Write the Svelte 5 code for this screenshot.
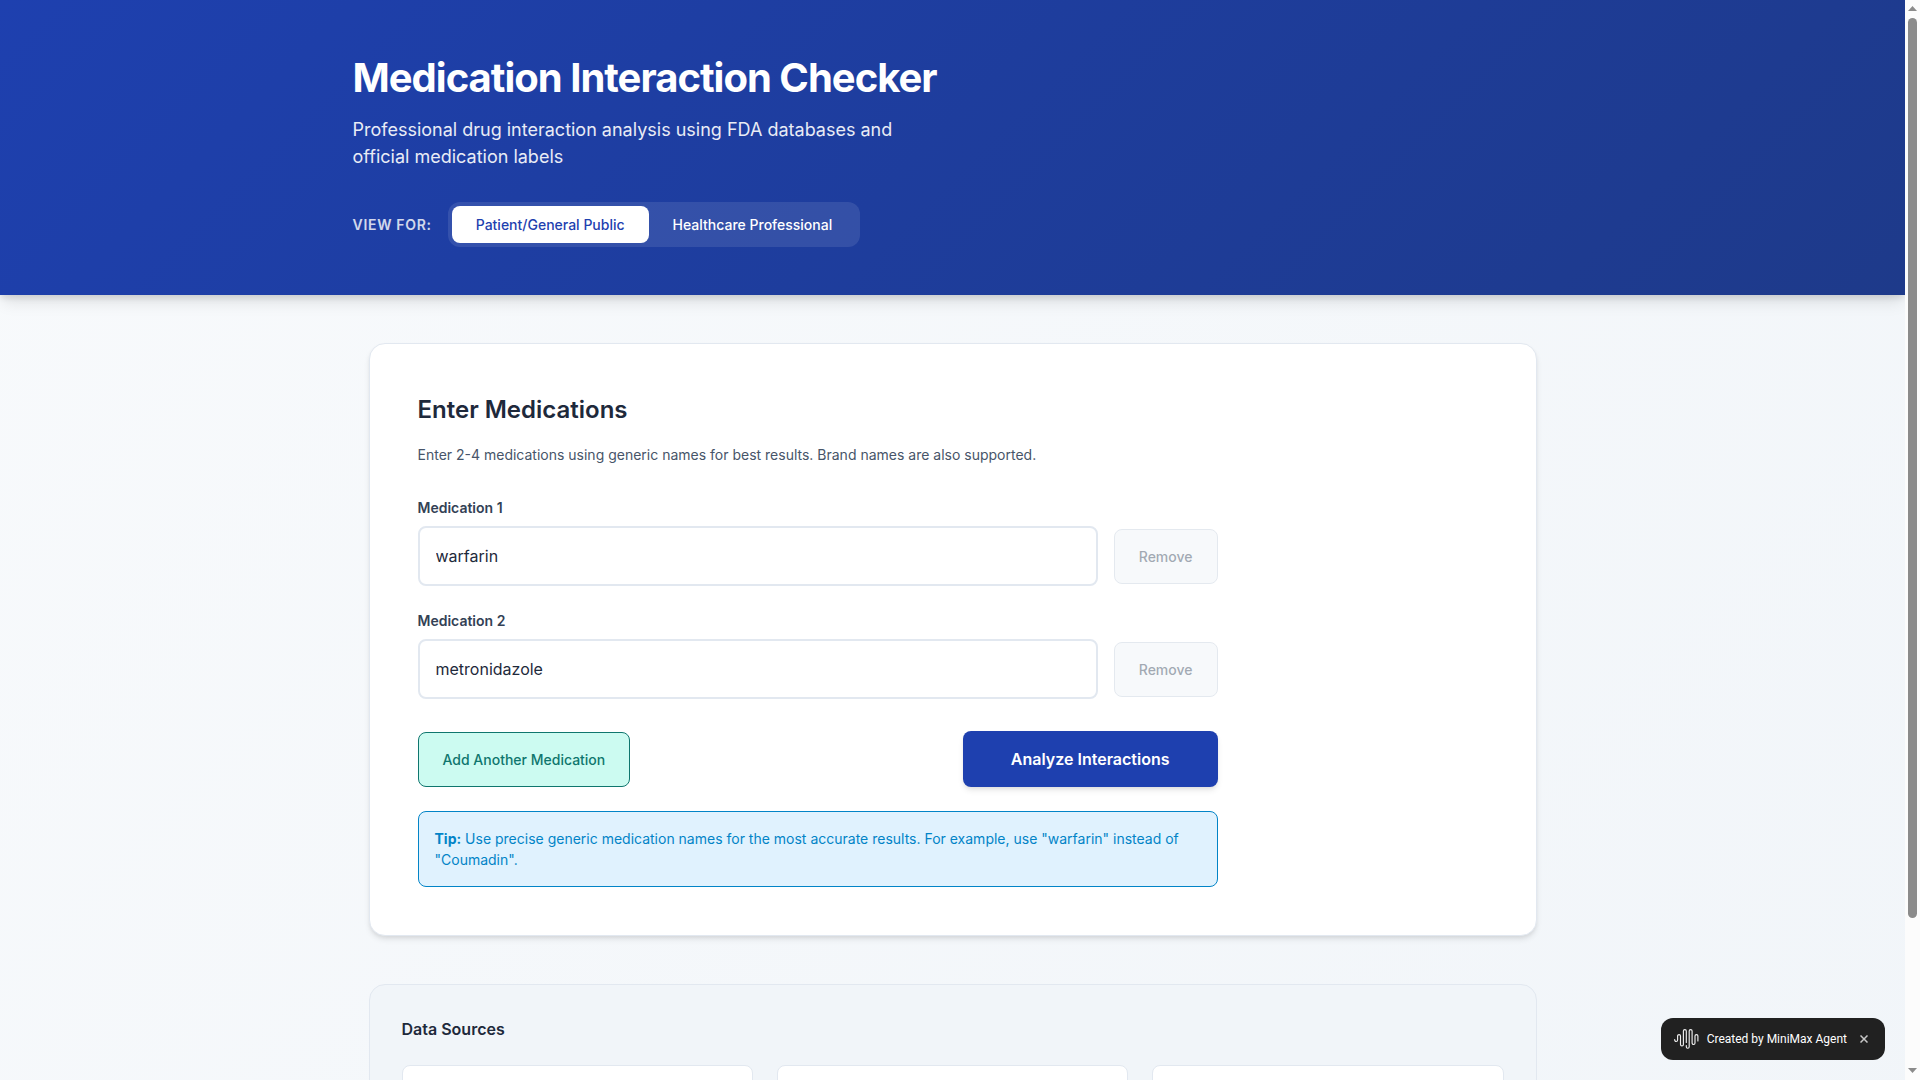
<script>
  let audience = $state('patient');
  let medications = $state(['warfarin', 'metronidazole']);

  function add() {
    if (medications.length < 4) medications.push('');
  }

  function remove(index) {
    medications.splice(index, 1);
  }
</script>

<div class="window">
  <div class="page">
    <header>
      <div class="header-inner">
        <h1>Medication Interaction Checker</h1>
        <p class="subtitle">
          Professional drug interaction analysis using FDA databases and official medication labels
        </p>
        <div class="view-for">
          <span class="view-label">View for:</span>
          <div class="toggle">
            <button type="button" class:active={audience === 'patient'} onclick={() => (audience = 'patient')}>
              Patient/General Public
            </button>
            <button type="button" class:active={audience === 'professional'} onclick={() => (audience = 'professional')}>
              Healthcare Professional
            </button>
          </div>
        </div>
      </div>
    </header>

    <main>
      <section class="card">
        <h2>Enter Medications</h2>
        <p class="hint">Enter 2-4 medications using generic names for best results. Brand names are also supported.</p>
        <form onsubmit={(e) => e.preventDefault()}>
          <div class="fields">
            {#each medications as _, i}
              <div class="field">
                <label for="medication-{i}">Medication {i + 1}</label>
                <div class="field-row">
                  <input id="medication-{i}" type="text" bind:value={medications[i]} />
                  <button type="button" class="remove" disabled={medications.length <= 2} onclick={() => remove(i)}>Remove</button>
                </div>
              </div>
            {/each}
          </div>
          <div class="actions">
            <button type="button" class="add" onclick={add}>Add Another Medication</button>
            <button type="submit" class="analyze">Analyze Interactions</button>
          </div>
          <div class="tip">
            <strong>Tip:</strong> Use precise generic medication names for the most accurate results. For example, use "warfarin" instead of "Coumadin".
          </div>
        </form>
      </section>

      <section class="sources">
        <h3>Data Sources</h3>
        <div class="source-grid">
          <div class="source"></div>
          <div class="source"></div>
          <div class="source"></div>
        </div>
      </section>
    </main>
  </div>

  <div class="scrollbar" aria-hidden="true">
    <svg width="15" height="18" viewBox="0 0 15 18"><path d="M7.500 6 L12 11 H3 Z" fill="#8b8b8b" /></svg>
    <div class="track"><div class="thumb"></div></div>
    <svg width="15" height="16" viewBox="0 0 15 16"><path d="M3 4 H12 L7.500 9 Z" fill="#8b8b8b" /></svg>
  </div>

  <div class="badge">
    <svg width="25" height="22" viewBox="0 0 25 22" fill="none" stroke="#f0f0f0" stroke-width="1.150" stroke-linecap="round" stroke-linejoin="round">
      <path d="M0.700 11.500 V12 a1.450 1.450 0 0 0 2.900 0 V8 a1.450 1.450 0 0 1 2.900 0 V16.500 a1.450 1.450 0 0 0 2.900 0 V3 a1.450 1.450 0 0 1 2.900 0 V14.500" />
      <path d="M12.300 17.500 V18.800 a1.450 1.450 0 0 0 2.900 0 V3 a1.450 1.450 0 0 1 2.900 0 V15 a1.450 1.450 0 0 0 2.900 0 V8 a1.450 1.450 0 0 1 2.900 0 V13" />
    </svg>
    <span>Created by MiniMax Agent</span>
    <button type="button" aria-label="Close">
      <svg width="8" height="8" viewBox="0 0 8 8" stroke="#c8c8c8" stroke-width="1.500"><path d="M0.500 0.500 L7.500 7.500 M7.500 0.500 L0.500 7.500" /></svg>
    </button>
  </div>
</div>

<style>
  :global(body) {
    margin: 0;
    font-family: Inter, 'Liberation Sans', sans-serif;
    font-size: 16px;
    line-height: 24px;
    color: #1e293b;
  }

  .window {
    display: grid;
    grid-template-columns: minmax(0, 1fr) 15px;
    height: 100vh;
    overflow: hidden;
  }

  .page {
    background: linear-gradient(135deg, #f8fafc 0%, #f1f5f9 100%);
    height: max-content;
    min-height: 100vh;
  }

  h1, h2, h3, p {
    margin: 0;
  }

  button, input {
    font-family: inherit;
    box-sizing: border-box;
    margin: 0;
  }

  button {
    border: 1px solid transparent;
    border-radius: 8px;
    font-size: 14px;
    line-height: 21px;
    font-weight: 500;
    padding: 16px 24px;
    cursor: pointer;
  }

  header {
    background: linear-gradient(135deg, #1e40af 0%, #1e3a8a 100%);
    color: #fff;
    padding: 48px 0;
    box-shadow: 0 4px 6px -1px rgba(0, 0, 0, 0.1), 0 10px 15px -3px rgba(0, 0, 0, 0.1);
  }

  .header-inner {
    max-width: 1200px;
    margin: 0 auto;
  }

  h1 {
    font-size: 40px;
    line-height: 60px;
    font-weight: 700;
    letter-spacing: -0.025em;
    margin-bottom: 8px;
  }

  .subtitle {
    font-size: 18px;
    line-height: 27px;
    max-width: 600px;
    opacity: 0.9;
    margin-bottom: 32px;
  }

  .view-for {
    display: flex;
    align-items: center;
    gap: 16px;
  }

  .view-label {
    font-size: 14px;
    line-height: 21px;
    font-weight: 600;
    letter-spacing: 0.05em;
    text-transform: uppercase;
    opacity: 0.8;
  }

  .toggle {
    display: flex;
    padding: 4px;
    border-radius: 12px;
    background: rgba(255, 255, 255, 0.1);
  }

  .toggle button {
    border: 0;
    padding: 8px 24px;
    background: transparent;
    color: #fff;
  }

  .toggle button.active {
    background: #fff;
    color: #1e40af;
  }

  main {
    max-width: 1168px;
    margin: 0 auto;
    padding: 48px 16px;
    display: flex;
    flex-direction: column;
    gap: 48px;
  }

  .card {
    background: #fff;
    border: 1px solid #e2e8f0;
    border-radius: 16px;
    padding: 48px;
    box-shadow: 0 4px 6px -1px rgba(0, 0, 0, 0.1), 0 2px 4px -1px rgba(0, 0, 0, 0.06);
  }

  h2 {
    font-size: 24px;
    line-height: 36px;
    font-weight: 600;
    margin-bottom: 16px;
  }

  .hint {
    font-size: 14px;
    line-height: 21px;
    color: #475569;
    margin-bottom: 32px;
  }

  form {
    max-width: 800px;
  }

  .fields {
    display: flex;
    flex-direction: column;
    gap: 24px;
    margin-bottom: 32px;
  }

  label {
    display: block;
    font-size: 14px;
    line-height: 21px;
    font-weight: 600;
    color: #334155;
    margin-bottom: 8px;
  }

  .field-row {
    display: flex;
    align-items: center;
    gap: 16px;
  }

  input {
    flex: 1;
    min-width: 0;
    height: 60px;
    padding: 16px;
    border: 2px solid #e2e8f0;
    border-radius: 8px;
    background: #fff;
    color: #1e293b;
    font-size: 16px;
    line-height: 24px;
  }

  .remove {
    background: #f1f5f9;
    border-color: #cbd5e1;
    color: #475569;
  }

  .remove:disabled {
    opacity: 0.5;
    cursor: default;
  }

  .actions {
    display: flex;
    justify-content: space-between;
    align-items: flex-end;
    margin-bottom: 24px;
  }

  .add {
    background: #ccfbf1;
    border-color: #0f766e;
    color: #0f766e;
  }

  .analyze {
    border: 0;
    padding: 16px 48px;
    background: #1e40af;
    color: #fff;
    font-size: 16px;
    line-height: 24px;
    font-weight: 600;
    box-shadow: 0 4px 6px -1px rgba(0, 0, 0, 0.1), 0 2px 4px -1px rgba(0, 0, 0, 0.06);
  }

  .tip {
    padding: 16px;
    border: 1px solid #0284c7;
    border-radius: 8px;
    background: #e0f2fe;
    color: #0284c7;
    font-size: 14px;
    line-height: 21px;
  }

  .tip strong {
    font-weight: 700;
  }

  .sources {
    background: #f1f5f9;
    border: 1px solid #e2e8f0;
    border-radius: 16px;
    padding: 32px;
  }

  h3 {
    font-size: 16px;
    line-height: 24px;
    font-weight: 600;
    margin-bottom: 24px;
  }

  .source-grid {
    display: grid;
    grid-template-columns: repeat(3, 1fr);
    gap: 24px;
  }

  .source {
    height: 110px;
    background: #fff;
    border: 1px solid #e2e8f0;
    border-radius: 8px;
  }

  .scrollbar {
    display: flex;
    flex-direction: column;
    height: 100vh;
    background: #fcfcfc;
  }

  .scrollbar svg {
    display: block;
    flex: none;
  }

  .track {
    flex: 1;
    padding: 0 3px;
  }

  .thumb {
    height: 86%;
    border-radius: 5px;
    background: #8b8b8b;
  }

  .badge {
    position: fixed;
    right: 35px;
    bottom: 20px;
    display: flex;
    align-items: center;
    height: 42px;
    box-sizing: border-box;
    padding: 0 16px 0 13px;
    border-radius: 12px;
    background: #212121;
    color: #fff;
    font-family: Roboto, sans-serif;
    font-size: 12px;
    line-height: 18px;
  }

  .badge span {
    margin: 0 12px 0 8px;
  }

  .badge button {
    display: flex;
    border: 0;
    padding: 1px;
    background: transparent;
  }
</style>
